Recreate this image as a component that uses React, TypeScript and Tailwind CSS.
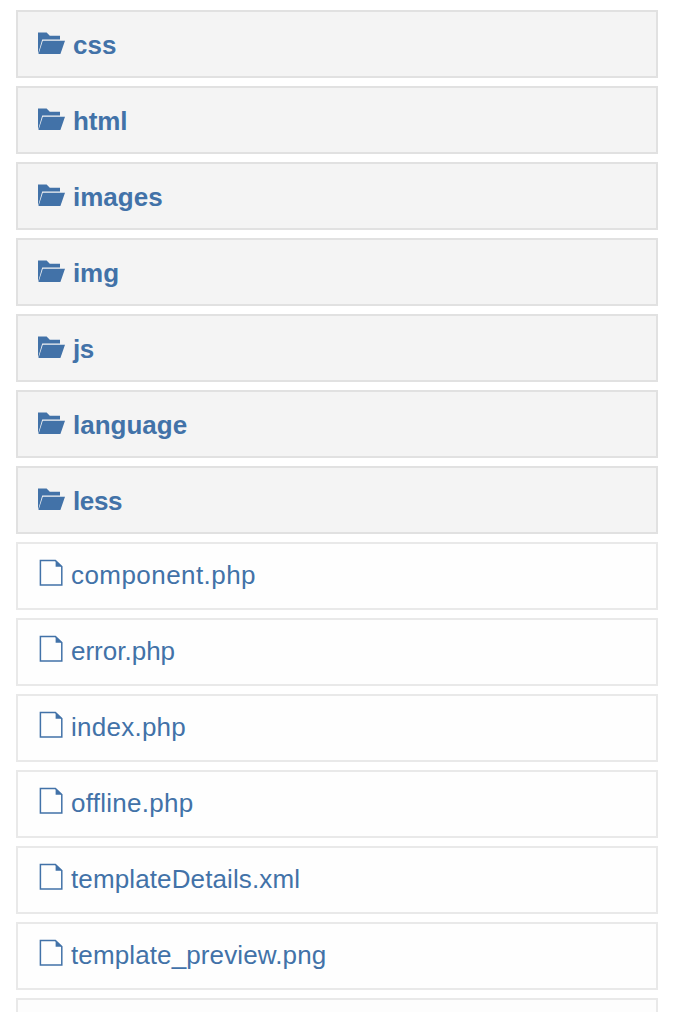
const folders = [
  { name: "css", tracking: "tracking-normal" },
  { name: "html", tracking: "tracking-[-0.1px]" },
  { name: "images", tracking: "tracking-normal" },
  { name: "img", tracking: "tracking-[-0.1px]" },
  { name: "js", tracking: "tracking-[-0.4px]" },
  { name: "language", tracking: "tracking-normal" },
  { name: "less", tracking: "tracking-[-0.4px]" },
];

const files = [
  { name: "component.php", tracking: "tracking-[0.44px]" },
  { name: "error.php", tracking: "tracking-normal" },
  { name: "index.php", tracking: "tracking-[0.25px]" },
  { name: "offline.php", tracking: "tracking-[0.27px]" },
  { name: "templateDetails.xml", tracking: "tracking-[0.12px]" },
  { name: "template_preview.png", tracking: "tracking-[0.12px]" },
];

function FolderIcon() {
  return (
    <svg width="28" height="24" viewBox="0 0 28 24" className="mb-px shrink-0" fill="#4272a8">
      <path d="M0 0.6h8.6l3.2 3.2H22v3.7H4.2L0.2 21.5H0z" />
      <path d="M4.8 8.8H27l-4.6 13.1H0.5z" />
    </svg>
  );
}

function FileIcon() {
  return (
    <svg width="25" height="28" viewBox="0 0 25 28" className="mb-2 shrink-0" fill="none" stroke="#4272a8" strokeWidth="1.5">
      <path d="M2.4 2.5h15l6.4 6V27H2.4z" />
      <path d="M17.6 2.5v6.2h6.2z" fill="#4272a8" stroke="none" />
    </svg>
  );
}

export default function App() {
  return (
    <main className="h-[1012px] overflow-hidden bg-white pt-[10px] pr-[22px] pl-4 text-[26px] text-[#4272a8]" style={{ fontFamily: '"Liberation Sans", Arial, sans-serif' }}>
      <ul className="flex flex-col gap-2">
        {folders.map(({ name, tracking }) => (
          <li key={name} className="flex h-[68px] shrink-0 items-center border-2 border-[#e1e1e1] bg-[#f4f4f4] pl-5 font-bold">
            <FolderIcon />
            <span className={`ml-[7px] pt-0.5 ${tracking}`}>{name}</span>
          </li>
        ))}
        {files.map(({ name, tracking }) => (
          <li key={name} className="flex h-[68px] shrink-0 items-center border-2 border-[#e9e9e9] bg-[#fefefe] pl-5">
            <FileIcon />
            <span className={`mb-0.5 ml-2 ${tracking}`}>{name}</span>
          </li>
        ))}
        <li className="h-[68px] shrink-0 border-2 border-[#e9e9e9] bg-[#fdfdfd]" />
      </ul>
    </main>
  );
}
